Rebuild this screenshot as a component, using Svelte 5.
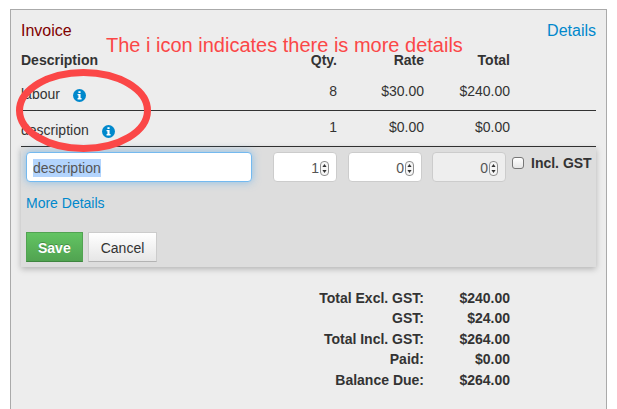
<script>
  import { onMount } from 'svelte';

  const items = [
    { name: 'labour', qty: 8, rate: 30, total: 240 },
    { name: 'description', qty: 1, rate: 0, total: 0 },
  ];

  const summary = [
    ['Total Excl. GST:', 240],
    ['GST:', 24],
    ['Total Incl. GST:', 264],
    ['Paid:', 0],
    ['Balance Due:', 264],
  ];

  let description = $state('description');
  let qty = $state(1);
  let rate = $state(0);
  let total = $state(0);
  let inclGst = $state(false);
  let descriptionField;

  const money = (n) => '$' + n.toFixed(2);

  onMount(() => {
    descriptionField.focus();
    descriptionField.select();
  });
</script>

{#snippet stepper()}
  <svg class="stepper" viewBox="0 0 9 15" aria-hidden="true">
    <rect x="0.5" y="0.5" width="8" height="14" rx="3.5" fill="#f6f6f6" stroke="#8f8f8f" />
    <path d="M4.5 3 L6.6 6 H2.4 Z M4.5 12 L6.6 9 H2.4 Z" fill="#333" />
  </svg>
{/snippet}

<main>
  <section class="panel">
    <header>
      <h1>Invoice</h1>
      <a href="#details">Details</a>
    </header>

    <table class="items">
      <colgroup>
        <col />
        <col class="c-qty" />
        <col class="c-rate" />
        <col class="c-total" />
        <col class="c-total" />
      </colgroup>
      <thead>
        <tr>
          <th class="name">Description</th>
          <th>Qty.</th>
          <th>Rate</th>
          <th>Total</th>
          <td></td>
        </tr>
      </thead>
      <tbody>
        {#each items as item}
          <tr>
            <td class="name">
              {item.name}
              <svg class="info" viewBox="0 0 12 12" role="img" aria-label="More details">
                <circle cx="6" cy="6" r="6" fill="#0088cc" />
                <path d="M5 2h2v1.6H5z M4.2 4.6H7v3.8h.9V9.6H4.2V8.4H5V5.8h-.8z" fill="#fff" />
              </svg>
            </td>
            <td>{item.qty}</td>
            <td>{money(item.rate)}</td>
            <td>{money(item.total)}</td>
            <td></td>
          </tr>
        {/each}
      </tbody>
    </table>

    <form onsubmit={(e) => e.preventDefault()}>
      <div class="fields">
        <div class="field wide active">
          <input type="text" aria-label="Description" bind:value={description} bind:this={descriptionField} />
        </div>
        <div class="field qty">
          <input type="number" aria-label="Quantity" bind:value={qty} />
          {@render stepper()}
        </div>
        <div class="field amount">
          <input type="number" aria-label="Rate" bind:value={rate} />
          {@render stepper()}
        </div>
        <div class="field amount readonly">
          <input type="number" aria-label="Total" bind:value={total} readonly />
          {@render stepper()}
        </div>
        <label class="gst">
          <input type="checkbox" bind:checked={inclGst} />
          Incl. GST
        </label>
      </div>
      <a class="more" href="#more">More Details</a>
      <div class="actions">
        <button class="save" type="submit">Save</button>
        <button class="cancel" type="button">Cancel</button>
      </div>
    </form>

    <table class="summary">
      <tbody>
        {#each summary as [label, value]}
          <tr>
            <th scope="row">{label}</th>
            <td>{money(value)}</td>
          </tr>
        {/each}
      </tbody>
    </table>

    <p class="note">The i icon indicates there is more details</p>
    <svg class="ring" viewBox="0 0 136 84" aria-hidden="true">
      <ellipse cx="67.5" cy="41.5" rx="64" ry="38" fill="none" stroke="#fb4747" stroke-width="7" />
    </svg>
  </section>
</main>

<style>
  :global(body) {
    margin: 0;
    background: #fff;
  }

  main {
    padding: 9px 10px 0;
    font: 14px/20px 'Liberation Sans', Helvetica, Arial, sans-serif;
    color: #333;
  }

  .panel {
    position: relative;
    box-sizing: border-box;
    min-height: calc(100vh - 9px);
    padding: 10px 10px 0;
    border: 1px solid #aaa;
    border-bottom: 0;
    background: #ededed;
  }

  header {
    display: flex;
    justify-content: space-between;
    height: 30px;
    font-size: 16px;
    line-height: 22px;
  }

  h1 {
    margin: 0;
    font-size: inherit;
    font-weight: normal;
    color: #800000;
  }

  a {
    color: #0088cc;
    text-decoration: none;
  }

  table {
    border-collapse: separate;
    border-spacing: 0;
  }

  .items {
    width: 100%;
    table-layout: fixed;
  }

  .c-qty { width: 64px; }
  .c-rate { width: 87px; }
  .c-total { width: 86px; }

  th,
  td {
    padding: 0;
    text-align: right;
    vertical-align: top;
    white-space: nowrap;
  }

  .name { text-align: left; }

  thead th { padding-bottom: 5px; }

  tbody td { padding-top: 6px; }

  .items tbody td {
    height: 29px;
    border-bottom: 1px solid #333;
  }

  .items tbody td.name {
    height: 26px;
    padding-top: 9px;
  }

  .info {
    width: 13px;
    height: 13px;
    margin-left: 9px;
    vertical-align: -3px;
  }

  form {
    padding: 5px;
    background: #ddd;
    box-shadow: 0 2px 6px rgba(0, 0, 0, 0.25);
  }

  .fields {
    display: flex;
    align-items: flex-start;
  }

  .field {
    display: flex;
    align-items: center;
    box-sizing: border-box;
    height: 30px;
    padding: 2px 7px 0 6px;
    border: 1px solid #ccc;
    border-radius: 4px;
    background: #fff;
  }

  .field input {
    flex: 1;
    min-width: 0;
    height: 18px;
    padding: 0;
    border: 0;
    outline: 0;
    background: none;
    font: inherit;
    line-height: 18px;
    color: #555;
  }

  .field input::selection {
    background: #b3d4fd;
    color: #555;
  }

  .field input[type='number'] {
    appearance: textfield;
    text-align: right;
  }

  .field input::-webkit-inner-spin-button,
  .field input::-webkit-outer-spin-button {
    display: none;
    margin: 0;
    appearance: none;
  }

  .wide {
    flex: 1;
    margin-right: 21px;
  }

  .active {
    border-color: #74b9ef;
    box-shadow: 0 0 8px rgba(82, 168, 236, 0.6);
  }

  .qty {
    width: 64px;
    margin-right: 11px;
  }

  .amount {
    width: 74px;
    margin-right: 10px;
  }

  .readonly {
    margin-right: 6px;
    background: #eee;
  }

  .stepper {
    flex: none;
    width: 9px;
    height: 15px;
    margin-left: 1px;
  }

  .gst {
    display: flex;
    width: 79px;
    gap: 7px;
    font-weight: bold;
    line-height: 22px;
    white-space: nowrap;
  }

  .gst input {
    flex: none;
    appearance: none;
    box-sizing: border-box;
    width: 12px;
    height: 12px;
    margin: 5px 0 0;
    border: 1px solid #777;
    border-radius: 3px;
    background: linear-gradient(#fff, #e6e6e6);
  }

  .gst input:checked { background: #0088cc; }

  .more {
    display: block;
    margin: 11px 0 19px;
  }

  .actions {
    display: flex;
    gap: 5px;
  }

  button {
    height: 30px;
    padding: 2px 12px 0;
    border: 1px solid #ccc;
    font: inherit;
  }

  .save {
    padding: 2px 11px 0;
    border-color: #51a351 #51a351 #3f8540;
    background: linear-gradient(#62c462, #51a351);
    color: #fff;
    font-weight: bold;
    text-shadow: 0 -1px 0 rgba(0, 0, 0, 0.25);
  }

  .cancel {
    border-bottom-color: #b3b3b3;
    background: linear-gradient(#fff, #e6e6e6);
    color: #333;
  }

  .summary {
    margin: 21px 86px 0 auto;
    font-weight: bold;
  }

  .summary td {
    width: 86px;
    padding: 0;
  }

  .summary tr:nth-child(even) { line-height: 21px; }

  .note {
    position: absolute;
    top: 25px;
    left: 95px;
    margin: 0;
    font-size: 20px;
    white-space: nowrap;
    color: #fb4747;
  }

  .ring {
    position: absolute;
    top: 59px;
    left: 5px;
    width: 136px;
    height: 84px;
    pointer-events: none;
  }
</style>
